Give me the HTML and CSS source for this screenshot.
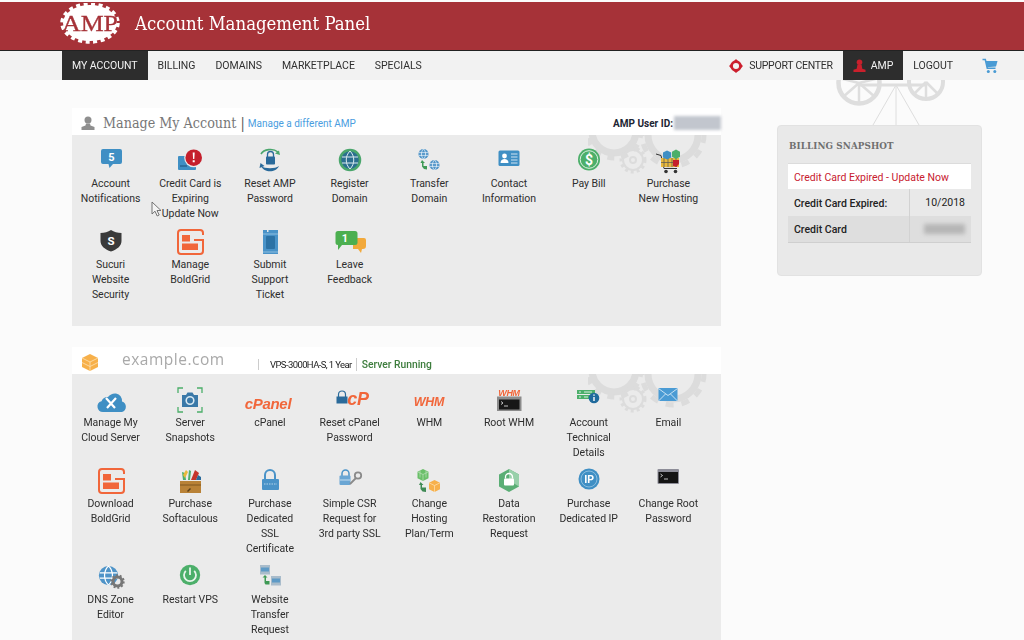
FILE: index.html
```html
<!DOCTYPE html>
<html lang="en">
<head>
<meta charset="utf-8">
<title>Account Management Panel</title>
<link rel="stylesheet" href="styles.css">
</head>
<body>
<svg class="defs" width="0" height="0" aria-hidden="true">
  <defs>
    <symbol id="boldgrid" viewBox="0 0 36 30" overflow="visible">
      <path d="M31 8V6a3 3 0 0 0-3-3H9a3 3 0 0 0-3 3v18a3 3 0 0 0 3 3h19a3 3 0 0 0 3-3V13h-9" fill="none" stroke="#f1663a" stroke-width="2"/>
      <rect x="10" y="8" width="8" height="6.5" fill="#f1663a"/>
      <rect x="10" y="16.5" width="16" height="6.5" fill="#f1663a"/>
    </symbol>
    <symbol id="globe" viewBox="0 0 12 12" overflow="visible">
      <circle cx="6" cy="6" r="5.5" fill="#4f94c8"/>
      <path d="M1 4.5h10M1 7.5h10M6 .5c-3 3-3 8 0 11M6 .5c3 3 3 8 0 11" fill="none" stroke="#fff" stroke-width=".7"/>
    </symbol>
    <symbol id="gears" viewBox="0 0 130 44" overflow="visible">
      <circle cx="26" cy="-4" r="22" fill="none" stroke="#dcdcdc" stroke-width="7"/>
      <circle cx="26" cy="-4" r="27" fill="none" stroke="#dcdcdc" stroke-width="5" stroke-dasharray="7 7"/>
      <circle cx="85" cy="0" r="25" fill="none" stroke="#dcdcdc" stroke-width="7"/>
      <circle cx="85" cy="0" r="31" fill="none" stroke="#dcdcdc" stroke-width="5" stroke-dasharray="8 8"/>
      <circle cx="45" cy="25" r="10" fill="none" stroke="#dcdcdc" stroke-width="2"/>
      <circle cx="45" cy="25" r="3" fill="none" stroke="#dcdcdc" stroke-width="2"/>
      <circle cx="45" cy="25" r="12" fill="none" stroke="#dcdcdc" stroke-width="3" stroke-dasharray="3 3"/>
    </symbol>
  </defs>
</svg>

<header class="banner">
  <div class="brand">
    <svg class="logo" viewBox="0 0 64 48">
      <ellipse cx="32" cy="20" rx="27" ry="18" fill="#fff"/>
      <ellipse cx="32" cy="20" rx="28" ry="19" fill="none" stroke="#fff" stroke-width="3.500" stroke-dasharray="4 3.500"/>
      <text x="32" y="27.500" text-anchor="middle" class="logo-text" textLength="56" lengthAdjust="spacingAndGlyphs">AMP</text>
    </svg>
    <h1 class="title">Account Management Panel</h1>
  </div>
</header>

<nav class="nav">
  <div class="nav-group">
    <a class="nav-item active">MY ACCOUNT</a>
    <a class="nav-item">BILLING</a>
    <a class="nav-item">DOMAINS</a>
    <a class="nav-item">MARKETPLACE</a>
    <a class="nav-item">SPECIALS</a>
  </div>
  <div class="nav-group">
    <a class="nav-item support">
      <svg class="nav-icon" viewBox="0 0 16 16"><circle cx="8" cy="8" r="5" fill="none" stroke="#cc1f2d" stroke-width="3"/><path d="M8 0 11 3H5zM8 16 5 13h6zM0 8l3-3v6zM16 8l-3 3V5z" fill="#cc1f2d"/></svg>
      SUPPORT CENTER
    </a>
    <a class="nav-item active account">
      <svg class="nav-icon" viewBox="0 0 14 14"><circle cx="7" cy="3.5" r="3" fill="#c9202c"/><path d="M4.8 6h4.4l.8 4.5 3.5 1V14H.5v-2.500l3.500-1z" fill="#c9202c"/></svg>
      AMP
    </a>
    <a class="nav-item logout">LOGOUT</a>
    <svg class="cart" viewBox="0 0 16 16"><path d="M.5 1.500h2.800l2 8.700h8.200" fill="none" stroke="#4a9bd4" stroke-width="1.600"/><path d="M3.800 3h11.700l-1.500 5.500-9 .8z" fill="#4a9bd4"/><circle cx="6.300" cy="13.500" r="1.500" fill="#4a9bd4"/><circle cx="12.800" cy="13.500" r="1.500" fill="#4a9bd4"/></svg>
  </div>
</nav>

<svg class="wheels" viewBox="0 0 115 46" aria-hidden="true">
  <g fill="none" stroke="#dedede">
    <circle cx="24" cy="3" r="20.500" stroke-width="4.500"/>
    <circle cx="91" cy="2" r="17" stroke-width="4"/>
    <path d="M24 3l-16 14M24 3l0 20M24 3l16 14M24 3l-20-5M24 3l20-5M91 2l-12 12M91 2v17M91 2l12 12" stroke-width="2.500"/>
    <path d="M24 5h67" stroke-width="3"/>
    <path d="M61 5 38 45M61 5v40M61 5l23 40" stroke-width="1"/>
  </g>
</svg>

<main class="page">
  <div class="col-main">
    <section class="panel">
      <div class="panel-head">
        <svg class="head-icon" viewBox="0 0 14 14"><circle cx="7" cy="4" r="3.500" fill="#8f8f8f"/><path d="M5 7.500h4l.5 2 4 1.500v3H.500v-3l4-1.500z" fill="#8f8f8f"/></svg>
        <h2 class="head-title">Manage My Account <span class="bar">|</span></h2>
        <a class="head-link">Manage a different AMP</a>
        <div class="user-id"><b>AMP User ID:</b><span class="blur-id"></span></div>
      </div>
      <div class="panel-body">
        <svg class="gears" aria-hidden="true"><use href="#gears"/></svg>
        <div class="grid">
          <a class="item">
            <svg class="icon" viewBox="0 0 36 30"><path d="M10 3h17a2 2 0 0 1 2 2v11a2 2 0 0 1-2 2h-7l-3.500 4-1-4H10a2 2 0 0 1-2-2V5a2 2 0 0 1 2-2z" fill="#3f8fc4"/><text x="18.500" y="14.500" class="n-num">5</text></svg>
            <span>Account<br>Notifications</span>
          </a>
          <a class="item cursor-host">
            <svg class="icon" viewBox="0 0 36 30"><rect x="6" y="10" width="18" height="14" rx="1" fill="#3f8fc4"/><rect x="8" y="19" width="7" height="2" fill="#2e6f9e"/><circle cx="21.700" cy="11.700" r="9.500" fill="#ebebeb"/><circle cx="21.700" cy="11.700" r="8.300" fill="#c51f2c"/><path d="M20.700 6.500h2l-.4 6.500h-1.200zM20.700 14.200h2v2h-2z" fill="#fff"/></svg>
            <span>Credit Card is<br>Expiring<br>Update Now</span>
            <svg class="pointer" viewBox="0 0 12 16"><path d="M1 1v12l3-2.800 2.200 4.800 2-1-2.200-4.500h4z" fill="#f4f4f4" stroke="#666" stroke-width=".9"/></svg>
          </a>
          <a class="item">
            <svg class="icon" viewBox="0 0 36 30"><path d="M9 8A10 7 0 0 1 26 6" fill="none" stroke="#4aa66c" stroke-width="1.600"/><path d="M28 9l-5-1.500 4-3z" fill="#4aa66c"/><path d="M15.500 11V8.500a3 3 0 0 1 6 0V11" fill="none" stroke="#2a6a9a" stroke-width="1.300"/><rect x="14" y="10.500" width="9" height="8" rx=".8" fill="#2a6a9a"/><path d="M9 20c3 7 15 7 18 0c-4 3-14 3-18 0z" fill="#2a6a9a"/><path d="M7.500 22l1-5 4 3z" fill="#2a6a9a"/></svg>
            <span>Reset AMP<br>Password</span>
          </a>
          <a class="item">
            <svg class="icon" viewBox="0 0 36 30"><circle cx="18" cy="14" r="10" fill="#2b6f8f" stroke="#4aa66c" stroke-width="2.500"/><path d="M10 11h16M10 17h16M18 5c-5 5-5 13 0 18M18 5c5 5 5 13 0 18" fill="none" stroke="#dcecf0" stroke-width="1"/></svg>
            <span>Register<br>Domain</span>
          </a>
          <a class="item">
            <svg class="icon" viewBox="0 0 36 30"><use href="#globe" x="7" y="2.500" width="11" height="11"/><use href="#globe" x="18" y="13.500" width="11" height="11"/><path d="M11 14l3 3h-1.500v3H16l0 3.500-3-.5-2-2.500v-3.500H9.500z" fill="#3f9a55"/></svg>
            <span>Transfer<br>Domain</span>
          </a>
          <a class="item">
            <svg class="icon" viewBox="0 0 36 30"><rect x="7.500" y="4.500" width="21" height="15.500" rx="1.500" fill="#3f8fc4"/><circle cx="13.500" cy="10" r="2.400" fill="#fff"/><path d="M9.500 17c0-3 2-4 4-4s4 1 4 4z" fill="#fff"/><path d="M20 8h6.500M20 11h6.500M20 14h6.500M20 17h6.500" stroke="#cfe4f2" stroke-width="1.200"/></svg>
            <span>Contact<br>Information</span>
          </a>
          <a class="item">
            <svg class="icon" viewBox="0 0 36 30"><circle cx="18" cy="13.500" r="11" fill="#4caf6a"/><circle cx="18" cy="13.500" r="8.800" fill="none" stroke="#dff1e4" stroke-width="1"/><text x="18" y="18.500" class="dollar">$</text></svg>
            <span>Pay Bill</span>
          </a>
          <a class="item">
            <svg class="icon" viewBox="0 0 36 30"><path d="M6 8l5 1.500 3 13h13" fill="none" stroke="#333" stroke-width="1"/><rect x="11" y="12" width="18" height="9" fill="#e9b93c"/><path d="M14 12v9M18 12v9M22 12v9M26 12v9M11 16.500h18" stroke="#555" stroke-width=".7"/><path d="M14 4.500l4.200 2v5l-4.200 2-4-2v-5z" fill="#3f8fc4" transform="translate(3)"/><path d="M26 3.500l4 2.200v5l-4 2.200-4-2.200v-5z" fill="#4caf6a"/><path d="M23 14h6v4l-2.500 3-3.500-1z" fill="#c51f2c"/><circle cx="16" cy="25.500" r="1.800" fill="#333"/><circle cx="25.500" cy="25.500" r="1.800" fill="#333"/></svg>
            <span>Purchase<br>New Hosting</span>
          </a>
          <a class="item">
            <svg class="icon" viewBox="0 0 36 30"><path d="M18 3c3 2 6.500 3 10.500 3v8c0 5-4.500 8.500-10.500 10.500C12 22.500 7.500 19 7.500 14V6C11.500 6 15 5 18 3z" fill="#3a3a3a"/><text x="18" y="18" class="shield">S</text></svg>
            <span>Sucuri<br>Website<br>Security</span>
          </a>
          <a class="item">
            <svg class="icon"><use href="#boldgrid"/></svg>
            <span>Manage<br>BoldGrid</span>
          </a>
          <a class="item">
            <svg class="icon" viewBox="0 0 36 30"><path d="M11 3h4v2h1.500V3H26v24H11z" fill="#4a93c8"/><rect x="14" y="9" width="9" height="13" rx="1" fill="#2c72a5"/><path d="M11 7h15M11 25h15" stroke="#8fbfe0" stroke-width="1"/></svg>
            <span>Submit<br>Support<br>Ticket</span>
          </a>
          <a class="item">
            <svg class="icon" viewBox="0 0 36 30"><path d="M21 11h11a2 2 0 0 1 2 2v6a3 3 0 0 1-3 3h-1l-1 4-3-4h-5z" fill="#f2a93b"/><path d="M6 4h17a2.500 2.500 0 0 1 2.500 2.500v9A2.500 2.500 0 0 1 23 18h-13l-4 5v-5a2.500 2.500 0 0 1-2.500-2.500v-9A2.500 2.500 0 0 1 6 4z" fill="#4caf50"/><text x="13" y="15" class="n-num">1</text></svg>
            <span>Leave<br>Feedback</span>
          </a>
        </div>
      </div>
    </section>

    <section class="panel">
      <div class="panel-head">
        <svg class="head-cube" viewBox="0 0 16 17"><path d="M8 0 16 4v9l-8 4-8-4V4z" fill="#f7b04a"/><path d="M0 4l8 4 8-4M0 8.500l8 4 8-4M8 8v9" fill="none" stroke="#fde2b5" stroke-width=".8"/></svg>
        <span class="domain">example.com</span>
        <div class="plan"><span class="plan-name">VPS-3000HA-S, 1 Year</span><span class="plan-status">Server Running</span></div>
      </div>
      <div class="panel-body">
        <svg class="gears" aria-hidden="true"><use href="#gears"/></svg>
        <div class="grid">
          <a class="item">
            <svg class="icon" viewBox="0 0 36 30"><path d="M10 27a5.500 5.500 0 0 1-1.500-10.800A7 7 0 0 1 15 12a9 9 0 0 1 8-3.500 8 8 0 0 1 6 8 5.500 5.500 0 0 1 0 10.500z" fill="#3f8fc4"/><path d="M13 13l9 10M23 13l-9 10" stroke="#fff" stroke-width="2.200"/></svg>
            <span>Manage My<br>Cloud Server</span>
          </a>
          <a class="item">
            <svg class="icon" viewBox="0 0 36 30"><path d="M6 8V3h5M25 3h5v5M30 22v5h-5M11 27H6v-5" fill="none" stroke="#4caf6a" stroke-width="1.300"/><path d="M10 10h4l1.500-2.500h5L22 10h4v12H10z" fill="#3a78a8"/><circle cx="18" cy="15.500" r="3.800" fill="none" stroke="#d8e8f2" stroke-width="1.600"/></svg>
            <span>Server<br>Snapshots</span>
          </a>
          <a class="item">
            <svg class="icon" viewBox="0 0 36 30"><text x="16" y="24" class="cp">cPanel</text></svg>
            <span>cPanel</span>
          </a>
          <a class="item">
            <svg class="icon" viewBox="0 0 36 30"><path d="M6.500 12V9.500a3.500 3.500 0 0 1 7 0V12" fill="none" stroke="#2a6a9a" stroke-width="1.200"/><rect x="4.500" y="11.500" width="11" height="7" fill="#2a6a9a"/><text x="26" y="19.500" class="cp cp-big">cP</text></svg>
            <span>Reset cPanel<br>Password</span>
          </a>
          <a class="item">
            <svg class="icon" viewBox="0 0 36 30"><text x="18" y="21" class="cp whm">WHM</text></svg>
            <span>WHM</span>
          </a>
          <a class="item">
            <svg class="icon" viewBox="0 0 36 30"><text x="18" y="10.500" class="cp whm-s">WHM</text><rect x="6" y="11.500" width="24.500" height="14.500" fill="#8b8b8b"/><rect x="8" y="14.500" width="20.500" height="10" fill="#171717"/><path d="M10 16.500l2 1.500-2 1.500M13 21h4" fill="none" stroke="#eee" stroke-width=".8"/></svg>
            <span>Root WHM</span>
          </a>
          <a class="item">
            <svg class="icon" viewBox="0 0 36 30"><rect x="6" y="5" width="18" height="4" fill="#4caf6a"/><rect x="6" y="10" width="18" height="4" fill="#4caf6a"/><path d="M8 7h2M8 12h2M13 7h8M13 12h4" stroke="#fff" stroke-width=".8"/><circle cx="23" cy="13" r="5.300" fill="#1f6a9c"/><path d="M23 9.500v1.200M23 12v4" stroke="#fff" stroke-width="1.400"/></svg>
            <span>Account<br>Technical<br>Details</span>
          </a>
          <a class="item">
            <svg class="icon" viewBox="0 0 36 30"><rect x="8.500" y="3" width="19" height="13" fill="#4a9bd4"/><path d="M8.500 3.500l9.500 7 9.500-7M8.500 16l7-7M27.500 16l-7-7" fill="none" stroke="#d5e9f6" stroke-width=".9"/></svg>
            <span>Email</span>
          </a>
          <a class="item">
            <svg class="icon"><use href="#boldgrid"/></svg>
            <span>Download<br>BoldGrid</span>
          </a>
          <a class="item">
            <svg class="icon" viewBox="0 0 36 30"><rect x="8" y="15" width="21" height="12" fill="#b98237"/><path d="M8 19h21" stroke="#7f5721" stroke-width="1"/><path d="M15 25l3-3 1 1-3 3z" fill="#5a3f18"/><path d="M11 14l-1-8 3 1 1 7zM16 14l1-10 2 1-1 9z" fill="#4caf6a"/><path d="M19 14l4-10 4 3-3 7z" fill="#c5352c"/><path d="M11 9l3-5 2 2-3 6z" fill="#e9b93c"/><path d="M24 14l2-5 3 2v3z" fill="#2a6a9a"/></svg>
            <span>Purchase<br>Softaculous</span>
          </a>
          <a class="item">
            <svg class="icon" viewBox="0 0 36 30"><path d="M13 14V9a5 5 0 0 1 10 0v5" fill="none" stroke="#4a93c8" stroke-width="2"/><rect x="10" y="13" width="17" height="11" rx="1" fill="#4a93c8"/><path d="M12 18h13" stroke="#cfe4f2" stroke-width=".8" stroke-dasharray="1.500 1"/></svg>
            <span>Purchase<br>Dedicated<br>SSL<br>Certificate</span>
          </a>
          <a class="item">
            <svg class="icon" viewBox="0 0 36 30"><path d="M10 10V7.500a3.500 3.500 0 0 1 7 0V10" fill="none" stroke="#4a93c8" stroke-width="1.500"/><rect x="7.500" y="9.500" width="11" height="9.500" rx="1" fill="#6aa6d4"/><path d="M8 14h10" stroke="#dcecf7" stroke-width=".8"/><circle cx="26" cy="9.500" r="3.200" fill="none" stroke="#8a8a8a" stroke-width="1.800"/><path d="M24 12l-6 6" stroke="#8a8a8a" stroke-width="1.800"/></svg>
            <span>Simple CSR<br>Request for<br>3rd party SSL</span>
          </a>
          <a class="item">
            <svg class="icon" viewBox="0 0 36 30"><path d="M12 3l5.500 2.800v6.400L12 15l-5.500-2.800V5.800z" fill="#6abf69"/><path d="M6.500 5.800 12 8.500l5.500-2.700M12 8.500V15M9 4.500v7M15 4.500v7" fill="none" stroke="#c9e8c8" stroke-width=".6"/><path d="M23.500 14l5.500 2.800v6.400L23.500 26 18 23.200v-6.400z" fill="#f7b04a"/><path d="M18 16.800l5.500 2.700 5.500-2.700M23.500 19.500V26" fill="none" stroke="#fde2b5" stroke-width=".7"/><path d="M9.500 16l3 3h-1.500v2.500h4V26l-3.500-.5-2-2.500v-4H8z" fill="#3f8a55"/></svg>
            <span>Change<br>Hosting<br>Plan/Term</span>
          </a>
          <a class="item">
            <svg class="icon" viewBox="0 0 36 30"><path d="M18 3l10 5.500v12L18 26 8 20.500v-12z" fill="#5aae75"/><path d="M18 3l10 5.500v12L18 14.500z" fill="#98d0aa"/><path d="M14.500 12.500V11a3.500 3.500 0 0 1 7 0v1.500" fill="none" stroke="#fff" stroke-width="1.300"/><rect x="13" y="12.500" width="10" height="7" rx="1" fill="#fff"/></svg>
            <span>Data<br>Restoration<br>Request</span>
          </a>
          <a class="item">
            <svg class="icon" viewBox="0 0 36 30"><circle cx="18" cy="13" r="10.500" fill="#3f8fc4"/><circle cx="18" cy="13" r="8" fill="none" stroke="#a9d0ea" stroke-width=".7"/><text x="18" y="16.800" class="ip">IP</text></svg>
            <span>Purchase<br>Dedicated IP</span>
          </a>
          <a class="item">
            <svg class="icon" viewBox="0 0 36 30"><rect x="7.500" y="3" width="21.500" height="15" rx="1" fill="#8d8d98"/><rect x="8.500" y="6" width="19.500" height="11" fill="#141414"/><path d="M10.500 8l2 1.500-2 1.500M14 13h4" fill="none" stroke="#eee" stroke-width=".8"/></svg>
            <span>Change Root<br>Password</span>
          </a>
          <a class="item">
            <svg class="icon" viewBox="0 0 36 30"><use href="#globe" x="5" y="3" width="21" height="21"/><circle cx="24.500" cy="19.500" r="4.500" fill="none" stroke="#777" stroke-width="3"/><circle cx="24.500" cy="19.500" r="6.300" fill="none" stroke="#777" stroke-width="1.800" stroke-dasharray="2 1.900"/></svg>
            <span>DNS Zone<br>Editor</span>
          </a>
          <a class="item">
            <svg class="icon" viewBox="0 0 36 30"><circle cx="18" cy="13" r="10.200" fill="#4caf6a"/><path d="M13.800 8.800a6 6 0 1 0 8.400 0" fill="none" stroke="#e8f5ec" stroke-width="1.800"/><path d="M18 5.500v7.500" stroke="#e8f5ec" stroke-width="1.800"/></svg>
            <span>Restart VPS</span>
          </a>
          <a class="item">
            <svg class="icon" viewBox="0 0 36 30"><rect x="8" y="3" width="10" height="9.500" fill="#a9bccb"/><rect x="9" y="5.500" width="8" height="4" fill="#5e9ac6"/><rect x="19" y="14" width="10" height="9.500" fill="#a9bccb"/><rect x="20" y="16.500" width="8" height="4" fill="#5e9ac6"/><path d="M13 13l2.500 2.500h-1.500v3.500h3.500v3.500h-4l-1-1.500v-5.500h-2z" fill="#3f9a55"/></svg>
            <span>Website<br>Transfer<br>Request</span>
          </a>
        </div>
      </div>
    </section>
  </div>

  <aside class="billing">
    <h3 class="billing-title">BILLING SNAPSHOT</h3>
    <div class="billing-table">
      <div class="billing-alert">Credit Card Expired - Update Now</div>
      <div class="billing-row first"><span class="billing-key">Credit Card Expired:</span><span class="billing-val">10/2018</span></div>
      <div class="billing-row shaded"><span class="billing-key">Credit Card</span><span class="billing-val"><span class="blur-card"></span></span></div>
    </div>
  </aside>
</main>
</body>
</html>
```

FILE: styles.css
```css
* { box-sizing: border-box; }
html, body { margin: 0; height: 640px; overflow: hidden; }
body { background: #fbfbfb; font-family: "Roboto", "Liberation Sans", sans-serif; color: #333; position: relative; }
.defs { position: absolute; }
.banner, .nav, .page { filter: blur(.3px); }

.banner { height: 49px; margin-top: 2px; background: #a63238; border-bottom: 1px solid #222; overflow: hidden; }
.brand { display: flex; align-items: center; padding-left: 58px; height: 100%; }
.logo { width: 64px; height: 48px; flex: none; margin-top: 1px; }
.logo-text { font: 400 23px "Liberation Serif", serif; fill: #a63238; stroke: #a63238; stroke-width: .3px; }
.title { margin: 0 0 6px 13px; font: 400 18.400px "DejaVu Serif Condensed", "DejaVu Serif", serif; color: #fff; white-space: nowrap; }

.nav { height: 29px; background: #f2f2f2; display: flex; justify-content: space-between; padding: 0 26px 0 62px; }
.nav-group { display: flex; align-items: stretch; }
.nav-item { display: flex; align-items: center; padding: 0 10px; font-size: 10.500px; color: #2f2f2f; letter-spacing: -.05px; white-space: nowrap; }
.nav-item.active { background: #2d2d2d; color: #f2f2f2; }
.nav-icon { width: 14px; height: 14px; margin-right: 6px; flex: none; }
.account .nav-icon { margin-right: 5px; width: 13px; height: 13px; }
.support { letter-spacing: -.25px; }
.cart { width: 16px; height: 16px; align-self: center; margin-left: 19px; }

.wheels { position: absolute; left: 835px; top: 80px; width: 115px; height: 46px; }

.page { display: flex; align-items: flex-start; padding: 28px 0 0 72px; position: relative; }
.col-main { width: 649px; flex: none; }
.panel { margin-bottom: 21px; }
.panel-head { height: 27px; padding-top: 3px; background: #fff; display: flex; align-items: center; position: relative; }
.panel-body { background: #ebebeb; padding: 11px 0 24px; position: relative; }
.gears { position: absolute; right: 3px; top: 0; width: 130px; height: 44px; overflow: hidden; }

.head-icon { width: 14px; height: 14px; margin-left: 9px; flex: none; }
.head-title { margin: 0 0 0 8px; font: 400 14.200px "DejaVu Serif Condensed", "DejaVu Serif", serif; color: #777; white-space: nowrap; }
.bar { color: #555; }
.head-link { margin-left: 3px; font-size: 10px; color: #4a9de0; }
.user-id { margin-left: auto; display: flex; align-items: center; font-size: 10px; color: #1d2533; }
.user-id b { font-weight: 700; }
.blur-id { width: 47px; height: 14px; background: #c2c6ce; filter: blur(1.500px); margin-left: 1px; }

.head-cube { width: 16px; height: 17px; margin-left: 10px; flex: none; }
.domain { margin: 0 0 6px 24px; font: 400 15.500px "Open Sans", sans-serif; letter-spacing: .5px; color: #a9a9a9; width: 136px; }
.plan { display: flex; align-items: center; font-size: 9.500px; height: 13px; margin-top: 5px; }
.plan-name { color: #222; border-left: 1px solid #ccc; padding: 0 4px 0 11px; letter-spacing: -.6px; white-space: nowrap; }
.plan-status { color: #3d7d3d; font-weight: 500; border-left: 1px solid #ccc; padding-left: 5px; font-size: 10.300px; white-space: nowrap; }

.grid { display: grid; grid-template-columns: repeat(8, 79.700px); row-gap: 6px; margin-left: -1.300px; position: relative; }
.item { display: flex; flex-direction: column; align-items: center; text-align: center; font-size: 10.500px; line-height: 15px; color: #2e2e2e; position: relative; letter-spacing: -.05px; }
.icon { width: 36px; height: 30px; flex: none; overflow: visible; display: block; }
.cursor-host .pointer { position: absolute; left: 1px; top: 55px; width: 12px; height: 16px; }
.pointer { overflow: visible; }

.n-num { font: 700 11px "Roboto", sans-serif; fill: #fff; text-anchor: middle; }
.dollar { font: 700 14px "Roboto", sans-serif; fill: #fff; text-anchor: middle; }
.shield { font: 700 11.500px "Roboto", sans-serif; fill: #fff; text-anchor: middle; }
.ip { font: 700 10.500px "Roboto", sans-serif; fill: #fff; text-anchor: middle; }
.cp { font: italic 700 15px "Liberation Sans", sans-serif; fill: #f1663a; text-anchor: middle; letter-spacing: -.3px; }
.cp-big { font-size: 18px; }
.whm { font-size: 12.500px; }
.whm-s { font-size: 9px; }

.billing { width: 205px; height: 151px; margin: 17px 0 0 56px; background: #e9e9e9; border: 1px solid #e2e2e2; border-radius: 4px; padding: 0 10px; position: relative; }
.billing-title { margin: 13px 0 0 1px; font: 700 9.750px/14px "DejaVu Serif Condensed", "DejaVu Serif", serif; color: #6f6f6f; white-space: nowrap; letter-spacing: .1px; }
.billing-table { margin-top: 10px; border-top: 1px solid #dcdcdc; border-bottom: 1px solid #cfcfcf; font-size: 10.500px; }
.billing-alert { height: 25px; padding: 1px 0 0 6px; background: #fff; color: #c8202f; display: flex; align-items: center; }
.billing-row { height: 26px; display: flex; align-items: center; color: #222; }
.billing-row.first { height: 27px; }
.billing-row.shaded { background: #dedede; }
.billing-key { width: 122px; height: 100%; display: flex; align-items: center; padding: 1px 0 0 6px; border-right: 1px solid #d2d2d2; font-weight: 500; }
.billing-val { flex: 1; text-align: right; padding-right: 6px; }
.blur-card { display: block; margin-left: 14px; height: 10px; background: #b5b5b5; filter: blur(2px); }
```
